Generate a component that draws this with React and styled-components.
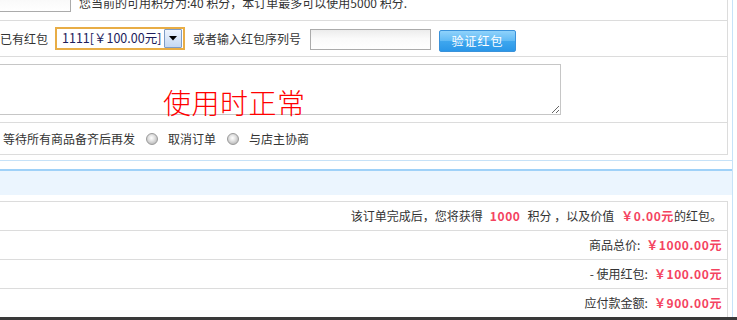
import React from 'react';
import styled, { createGlobalStyle } from 'styled-components';

const GlobalStyle = createGlobalStyle`
  html, body { margin: 0; padding: 0; background: #fff; }
  body {
    font-family: "Noto Sans CJK SC", "Noto Sans", sans-serif;
    font-size: 12px;
    color: #333;
    overflow: hidden;
  }
  * { box-sizing: border-box; }
`;

const Page = styled.div`
  width: 737px;
  height: 320px;
  overflow: hidden;
  display: flex;
  flex-direction: column;
`;

const Panel = styled.section`
  flex-shrink: 0;
  width: 733px;
  margin-top: ${p => p.$mt || 0}px;
  padding-right: 4px;
  padding-bottom: ${p => p.$pb || 0}px;
  border-right: 1px solid #c6e2f8;
  border-bottom: ${p => (p.$closed ? '1px solid #c6e2f8' : 'none')};
`;

const Table = styled.div`
  width: 728px;
  border-right: 1px solid #dcdcdc;
  margin-top: ${p => p.$mt || 0}px;
  display: flex;
  flex-direction: column;
`;

const Row = styled.div`
  position: relative;
  display: flex;
  align-items: ${p => p.$align || 'center'};
  height: ${p => p.$h}px;
  padding-left: ${p => p.$pl || 0}px;
  border-bottom: 1px solid #dcdcdc;
  white-space: nowrap;
  line-height: 1;
`;

const SumRow = styled.div`
  display: flex;
  align-items: center;
  justify-content: flex-end;
  height: 29px;
  padding-right: 5px;
  border-top: 1px solid #dcdcdc;
  white-space: nowrap;
  line-height: 1;
  color: #333;
`;

const Label = styled.span`
  margin-left: ${p => p.$ml || 0}px;
  color: #333;
`;

const Red = styled.span`
  color: #f44360;
  font-weight: bold;
  letter-spacing: 0.6px;
  margin-left: ${p => p.$ml || 0}px;
  margin-right: ${p => p.$mr || 0}px;
`;

const TextInput = styled.div`
  flex-shrink: 0;
  margin-left: ${p => p.$ml || 0}px;
  margin-top: ${p => p.$mt || 0}px;
  width: ${p => p.$w}px;
  height: ${p => p.$h}px;
  border: 1px solid #ababab;
  background: linear-gradient(#ececec, #fafafa 45%, #fff);
`;

const Select = styled.div`
  flex-shrink: 0;
  display: flex;
  align-items: center;
  margin-left: 7px;
  width: 130px;
  height: 23px;
  border: 2px solid #e8ad46;
  background: #fff;
  padding: 0 1px 0 5px;
  color: #1d1d5c;
  font-size: 12.5px;
`;

const SelectText = styled.span`
  flex: 1;
`;

const SelectArrow = styled.span`
  display: flex;
  align-items: center;
  justify-content: center;
  width: 18px;
  height: 19px;
  border: 1px solid #7d9cc6;
  border-radius: 1px;
  background: linear-gradient(#eef4fd, #c4d8f3);
`;

const VerifyButton = styled.button`
  flex-shrink: 0;
  margin-left: 8px;
  margin-top: 5px;
  width: 77px;
  height: 22px;
  padding: 0;
  border: 1px solid #3a92da;
  border-radius: 2px;
  background: linear-gradient(#8fd2fb 0%, #62bbf5 48%, #3ea6ee 52%, #2a97e8 100%);
  color: #fff;
  font-family: "Noto Sans CJK SC", sans-serif;
  font-size: 12px;
  letter-spacing: 1px;
  line-height: 1;
`;

const Note = styled.textarea`
  margin-top: 7px;
  margin-left: -100px;
  width: 661px;
  height: 51px;
  border: 1px solid #c6c6c6;
  background: #fff;
  outline: none;
  resize: both;
  padding: 0;
`;

const Overlay = styled.span`
  position: absolute;
  left: 163px;
  top: 31px;
  font-size: 28px;
  line-height: 1;
  letter-spacing: 0.5px;
  color: #ff0000;
  font-weight: 300;
  pointer-events: none;
`;

const Radio = styled.span`
  flex-shrink: 0;
  display: inline-block;
  margin-left: 11px;
  width: 12px;
  height: 12px;
  border-radius: 50%;
  border: 1px solid #9a9a9a;
  background: radial-gradient(circle at 45% 40%, #ffffff 0, #e4e4e4 35%, #b9b9b9 80%, #d8d8d8 100%);
`;

const SectionHead = styled.div`
  margin-top: 8px;
  margin-right: -4px;
  height: 26px;
  border-top: 2px solid #9fd1f8;
  background: #ebf5fe;
`;

const BottomBar = styled.div`
  flex-shrink: 0;
  height: 3px;
  background: #3a3a3a;
`;

export default function App() {
  return (
    <>
      <GlobalStyle />
      <Page>
        <Panel $mt={-14} $pb={5} $closed>
          <Table>
            <Row $h={35}>
              <TextInput $ml={-30} $w={101} $h={21} $mt={-4} />
              <Label $ml={8}>您当前的可用积分为:40 积分，本订单最多可以使用5000 积分.</Label>
            </Row>
            <Row $h={36}>
              <Label>已有红包</Label>
              <Select>
                <SelectText>1111[￥100.00元]</SelectText>
                <SelectArrow>
                  <svg width="8" height="5" viewBox="0 0 8 5">
                    <path d="M0 0 H8 L4 4.5 Z" fill="#000" />
                  </svg>
                </SelectArrow>
              </Select>
              <Label $ml={8}>或者输入红包序列号</Label>
              <TextInput $ml={9} $w={121} $h={21} $mt={1} />
              <VerifyButton>验证红包</VerifyButton>
            </Row>
            <Row $h={66} $align="flex-start">
              <Note defaultValue="" />
              <Overlay>使用时正常</Overlay>
            </Row>
            <Row $h={32} $pl={3}>
              <Label>等待所有商品备齐后再发</Label>
              <Radio />
              <Label $ml={10}>取消订单</Label>
              <Radio />
              <Label $ml={10}>与店主协商</Label>
            </Row>
          </Table>
        </Panel>
        <Panel>
          <SectionHead />
          <Table $mt={6}>
            <SumRow>
              该订单完成后，您将获得<Red $ml={7} $mr={7}>1000</Red>积分 ，以及价值<Red $ml={7}>￥0.00元</Red>的红包。
            </SumRow>
            <SumRow>
              商品总价:<Red $ml={6}>￥1000.00元</Red>
            </SumRow>
            <SumRow>
              - 使用红包:<Red $ml={6}>￥100.00元</Red>
            </SumRow>
            <SumRow>
              应付款金额:<Red $ml={6}>￥900.00元</Red>
            </SumRow>
          </Table>
        </Panel>
        <BottomBar />
      </Page>
    </>
  );
}
